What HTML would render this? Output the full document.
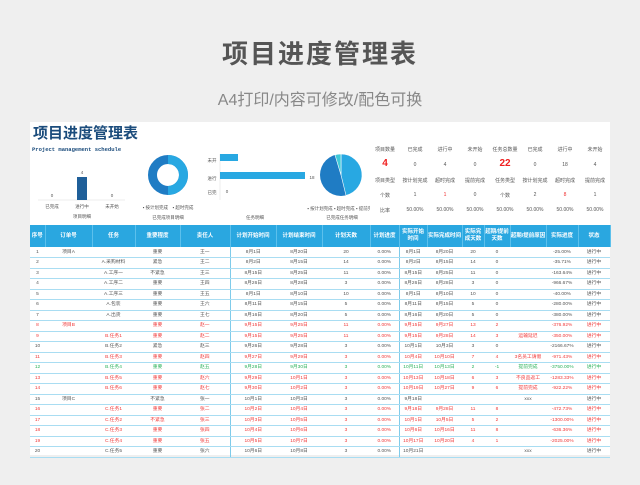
<!DOCTYPE html>
<html><head><meta charset="utf-8"><style>
*{margin:0;padding:0;box-sizing:border-box}
body{width:640px;height:485px;background:#efefef;font-family:"Liberation Sans","Noto Sans CJK SC",sans-serif;position:relative;overflow:hidden}
.t1{position:absolute;top:34px;left:0;width:640px;text-align:center;font-size:26px;color:#555;font-weight:bold;letter-spacing:2px}
.t2{position:absolute;top:86px;left:0;width:640px;text-align:center;font-size:16px;color:#888}
.panel{position:absolute;left:30px;top:122px;width:580px;height:333px;background:#fff}
.a{position:absolute;white-space:nowrap;font-size:5px;color:#555}
table{position:absolute;left:0;top:103px;border-collapse:collapse;table-layout:fixed;width:580px}
th{background:#2aa7e0;color:#fff;font-size:5.5px;height:22px;font-weight:bold;line-height:7px;border-right:1px solid #5cc0ec}
td{height:10.5px;font-size:4.8px;text-align:center;color:#555;border-bottom:1px solid #a9ddf2;white-space:nowrap;overflow:hidden;line-height:9px}
tr.r td{color:#f03a3a}tr.g td{color:#2ab25a}
td:nth-child(5),td:nth-child(9){border-right:1px solid #7fcbea}
.st{position:absolute;left:340px;top:20px;width:240px}
.st div{position:absolute;width:30px;text-align:center;font-size:5px;color:#555}
</style></head><body>
<div class="t1">项目进度管理表</div>
<div class="t2">A4打印/内容可修改/配色可换</div>
<div class="panel">
<div class="a" style="left:3px;top:0px;font-size:15px;color:#1b4c7c;font-weight:bold">项目进度管理表</div>
<div class="a" style="left:2px;top:24px;font-size:5.5px;color:#1b4c7c;font-family:'Liberation Mono',monospace;font-weight:bold">Project management schedule</div>
<svg style="position:absolute;left:0;top:0" width="340" height="103">
<line x1="8" y1="78" x2="95" y2="78" stroke="#ddd" stroke-width="0.5"/>
<rect x="47" y="55" width="10" height="23" fill="#1f5f99"/>
<g font-size="4.5" fill="#555" text-anchor="middle" font-family="Liberation Sans,Noto Sans CJK SC">
<text x="22" y="75">0</text><text x="52" y="52">4</text><text x="82" y="75">0</text>
<text x="22" y="86">已完成</text><text x="52" y="86">进行中</text><text x="82" y="86">未开始</text>
<text x="52" y="96">项目明细</text>
<text x="138" y="87">▪ 按计划完成　▪ 超时完成</text>
<text x="138" y="97">已完成项目明细</text>
<text x="225" y="97">任务明细</text>
<text x="312" y="97">已完成任务明细</text>
<text x="182" y="40">未开</text><text x="182" y="58">进行</text><text x="182" y="72">已完</text>
<text x="207" y="38">4</text><text x="282" y="57">18</text><text x="197" y="71">0</text>
<text x="312" y="88">▪ 按计划完成 ▪ 超时完成 ▪ 提前完成</text>
</g>
<circle cx="138" cy="53" r="15.5" fill="none" stroke="#1f7cc4" stroke-width="9"/>
<path d="M138 37.5 A15.5 15.5 0 0 1 138 68.5" fill="none" stroke="#28a8e2" stroke-width="9"/>
<line x1="190" y1="32" x2="190" y2="78" stroke="#ddd" stroke-width="0.5"/>
<rect x="190" y="32" width="18" height="7" fill="#28a8e2"/>
<rect x="190" y="50" width="85" height="7" fill="#28a8e2"/>
<circle cx="311" cy="53" r="21" fill="#1f7cc4"/>
<path d="M311 53 L311 32 A21 21 0 0 1 316 73.4 Z" fill="#28a8e2" stroke="#fff" stroke-width="0.6"/>
<path d="M311 53 L305 32.9 A21 21 0 0 1 311 32 Z" fill="#3ec9d8" stroke="#fff" stroke-width="0.6"/>
</svg>
<div class="st">
<div style="left:0;top:4px">项目数量</div><div style="left:30px;top:4px">已完成</div><div style="left:60px;top:4px">进行中</div><div style="left:90px;top:4px">未开始</div><div style="left:120px;top:4px">任务总数量</div><div style="left:150px;top:4px">已完成</div><div style="left:180px;top:4px">进行中</div><div style="left:210px;top:4px">未开始</div>
<div style="left:0;top:16px;font-size:10px;color:#f02020;font-weight:bold">4</div><div style="left:30px;top:20px">0</div><div style="left:60px;top:20px">4</div><div style="left:90px;top:20px">0</div><div style="left:120px;top:16px;font-size:10px;color:#f02020;font-weight:bold">22</div><div style="left:150px;top:20px">0</div><div style="left:180px;top:20px">18</div><div style="left:210px;top:20px">4</div>
<div style="left:0;top:35px">项目类型</div><div style="left:30px;top:35px">按计划完成</div><div style="left:60px;top:35px">超时完成</div><div style="left:90px;top:35px">提前完成</div><div style="left:120px;top:35px">任务类型</div><div style="left:150px;top:35px">按计划完成</div><div style="left:180px;top:35px">超时完成</div><div style="left:210px;top:35px">提前完成</div>
<div style="left:0;top:50px">个数</div><div style="left:30px;top:50px">1</div><div style="left:60px;top:50px;color:#f03030">1</div><div style="left:90px;top:50px">0</div><div style="left:120px;top:50px">个数</div><div style="left:150px;top:50px">2</div><div style="left:180px;top:50px;color:#f03030">8</div><div style="left:210px;top:50px">1</div>
<div style="left:0;top:65px">比率</div><div style="left:30px;top:65px">50.00%</div><div style="left:60px;top:65px">50.00%</div><div style="left:90px;top:65px">50.00%</div><div style="left:120px;top:65px">50.00%</div><div style="left:150px;top:65px">50.00%</div><div style="left:180px;top:65px">50.00%</div><div style="left:210px;top:65px">50.00%</div>
</div>
<table>
<colgroup><col style="width:15px"><col style="width:47px"><col style="width:43px"><col style="width:45px"><col style="width:50px"><col style="width:46px"><col style="width:46px"><col style="width:48px"><col style="width:29px"><col style="width:28px"><col style="width:35px"><col style="width:22px"><col style="width:26px"><col style="width:36px"><col style="width:32px"><col style="width:32px"></colgroup>
<tr><th>序号</th><th>订单号</th><th>任务</th><th>重要程度</th><th>责任人</th><th>计划开始时间</th><th>计划结束时间</th><th>计划天数</th><th>计划进度</th><th>实际开始时间</th><th>实际完成时间</th><th>实际完成天数</th><th>超期/提前天数</th><th>超期/提前原因</th><th>实际进度</th><th>状态</th></tr>
<tr><td>1</td><td>项目A</td><td></td><td>重要</td><td>王一</td><td>8月1日</td><td>8月20日</td><td>20</td><td>0.00%</td><td>8月1日</td><td>8月20日</td><td>20</td><td>0</td><td></td><td>-25.00%</td><td>进行中</td></tr>
<tr><td>2</td><td></td><td>A.采购材料</td><td>紧急</td><td>王二</td><td>8月2日</td><td>8月15日</td><td>14</td><td>0.00%</td><td>8月2日</td><td>8月15日</td><td>14</td><td>0</td><td></td><td>-35.71%</td><td>进行中</td></tr>
<tr><td>3</td><td></td><td>A.工序一</td><td>不紧急</td><td>王三</td><td>8月15日</td><td>8月25日</td><td>11</td><td>0.00%</td><td>8月15日</td><td>8月25日</td><td>11</td><td>0</td><td></td><td>-163.64%</td><td>进行中</td></tr>
<tr><td>4</td><td></td><td>A.工序二</td><td>重要</td><td>王四</td><td>8月26日</td><td>8月28日</td><td>3</td><td>0.00%</td><td>8月26日</td><td>8月28日</td><td>3</td><td>0</td><td></td><td>-966.67%</td><td>进行中</td></tr>
<tr><td>5</td><td></td><td>A.工序三</td><td>重要</td><td>王五</td><td>8月1日</td><td>8月10日</td><td>10</td><td>0.00%</td><td>8月1日</td><td>8月10日</td><td>10</td><td>0</td><td></td><td>-40.00%</td><td>进行中</td></tr>
<tr><td>6</td><td></td><td>A.包装</td><td>重要</td><td>王六</td><td>8月11日</td><td>8月15日</td><td>5</td><td>0.00%</td><td>8月11日</td><td>8月15日</td><td>5</td><td>0</td><td></td><td>-280.00%</td><td>进行中</td></tr>
<tr><td>7</td><td></td><td>A.出货</td><td>重要</td><td>王七</td><td>8月16日</td><td>8月20日</td><td>5</td><td>0.00%</td><td>8月16日</td><td>8月20日</td><td>5</td><td>0</td><td></td><td>-380.00%</td><td>进行中</td></tr>
<tr class="r"><td>8</td><td>项目B</td><td></td><td>重要</td><td>赵一</td><td>9月15日</td><td>9月25日</td><td>11</td><td>0.00%</td><td>9月15日</td><td>9月27日</td><td>13</td><td>2</td><td></td><td>-376.92%</td><td>进行中</td></tr>
<tr class="r"><td>9</td><td></td><td>B.任务1</td><td>重要</td><td>赵二</td><td>9月15日</td><td>9月25日</td><td>11</td><td>0.00%</td><td>9月15日</td><td>9月28日</td><td>14</td><td>3</td><td>运输延迟</td><td>-350.00%</td><td>进行中</td></tr>
<tr><td>10</td><td></td><td>B.任务2</td><td>紧急</td><td>赵三</td><td>9月26日</td><td>9月28日</td><td>3</td><td>0.00%</td><td>10月1日</td><td>10月3日</td><td>3</td><td>0</td><td></td><td>-2166.67%</td><td>进行中</td></tr>
<tr class="r"><td>11</td><td></td><td>B.任务3</td><td>重要</td><td>赵四</td><td>9月27日</td><td>9月29日</td><td>3</td><td>0.00%</td><td>10月4日</td><td>10月10日</td><td>7</td><td>4</td><td>3名员工请假</td><td>-971.43%</td><td>进行中</td></tr>
<tr class="g"><td>12</td><td></td><td>B.任务4</td><td>重要</td><td>赵五</td><td>9月28日</td><td>9月30日</td><td>3</td><td>0.00%</td><td>10月11日</td><td>10月13日</td><td>2</td><td>-1</td><td>提前完成</td><td>-3750.00%</td><td>进行中</td></tr>
<tr class="r"><td>13</td><td></td><td>B.任务5</td><td>重要</td><td>赵六</td><td>9月29日</td><td>10月1日</td><td>3</td><td>0.00%</td><td>10月13日</td><td>10月18日</td><td>6</td><td>3</td><td>不良品返工</td><td>-1283.33%</td><td>进行中</td></tr>
<tr class="r"><td>14</td><td></td><td>B.任务6</td><td>重要</td><td>赵七</td><td>9月30日</td><td>10月2日</td><td>3</td><td>0.00%</td><td>10月19日</td><td>10月27日</td><td>9</td><td>6</td><td>提前完成</td><td>-922.22%</td><td>进行中</td></tr>
<tr><td>15</td><td>项目C</td><td></td><td>不紧急</td><td>张一</td><td>10月1日</td><td>10月3日</td><td>3</td><td>0.00%</td><td>9月18日</td><td></td><td></td><td></td><td>xxx</td><td></td><td>进行中</td></tr>
<tr class="r"><td>16</td><td></td><td>C.任务1</td><td>重要</td><td>张二</td><td>10月2日</td><td>10月4日</td><td>3</td><td>0.00%</td><td>9月18日</td><td>9月28日</td><td>11</td><td>8</td><td></td><td>-472.73%</td><td>进行中</td></tr>
<tr class="r"><td>17</td><td></td><td>C.任务2</td><td>不紧急</td><td>张三</td><td>10月3日</td><td>10月5日</td><td>3</td><td>0.00%</td><td>10月1日</td><td>10月5日</td><td>5</td><td>2</td><td></td><td>-1300.00%</td><td>进行中</td></tr>
<tr class="r"><td>18</td><td></td><td>C.任务3</td><td>重要</td><td>张四</td><td>10月4日</td><td>10月6日</td><td>3</td><td>0.00%</td><td>10月6日</td><td>10月16日</td><td>11</td><td>8</td><td></td><td>-636.36%</td><td>进行中</td></tr>
<tr class="r"><td>19</td><td></td><td>C.任务4</td><td>重要</td><td>张五</td><td>10月5日</td><td>10月7日</td><td>3</td><td>0.00%</td><td>10月17日</td><td>10月20日</td><td>4</td><td>1</td><td></td><td>-2025.00%</td><td>进行中</td></tr>
<tr><td>20</td><td></td><td>C.任务5</td><td>重要</td><td>张六</td><td>10月6日</td><td>10月8日</td><td>3</td><td>0.00%</td><td>10月21日</td><td></td><td></td><td></td><td>xxx</td><td></td><td>进行中</td></tr>
</table>
</div>
</body></html>
